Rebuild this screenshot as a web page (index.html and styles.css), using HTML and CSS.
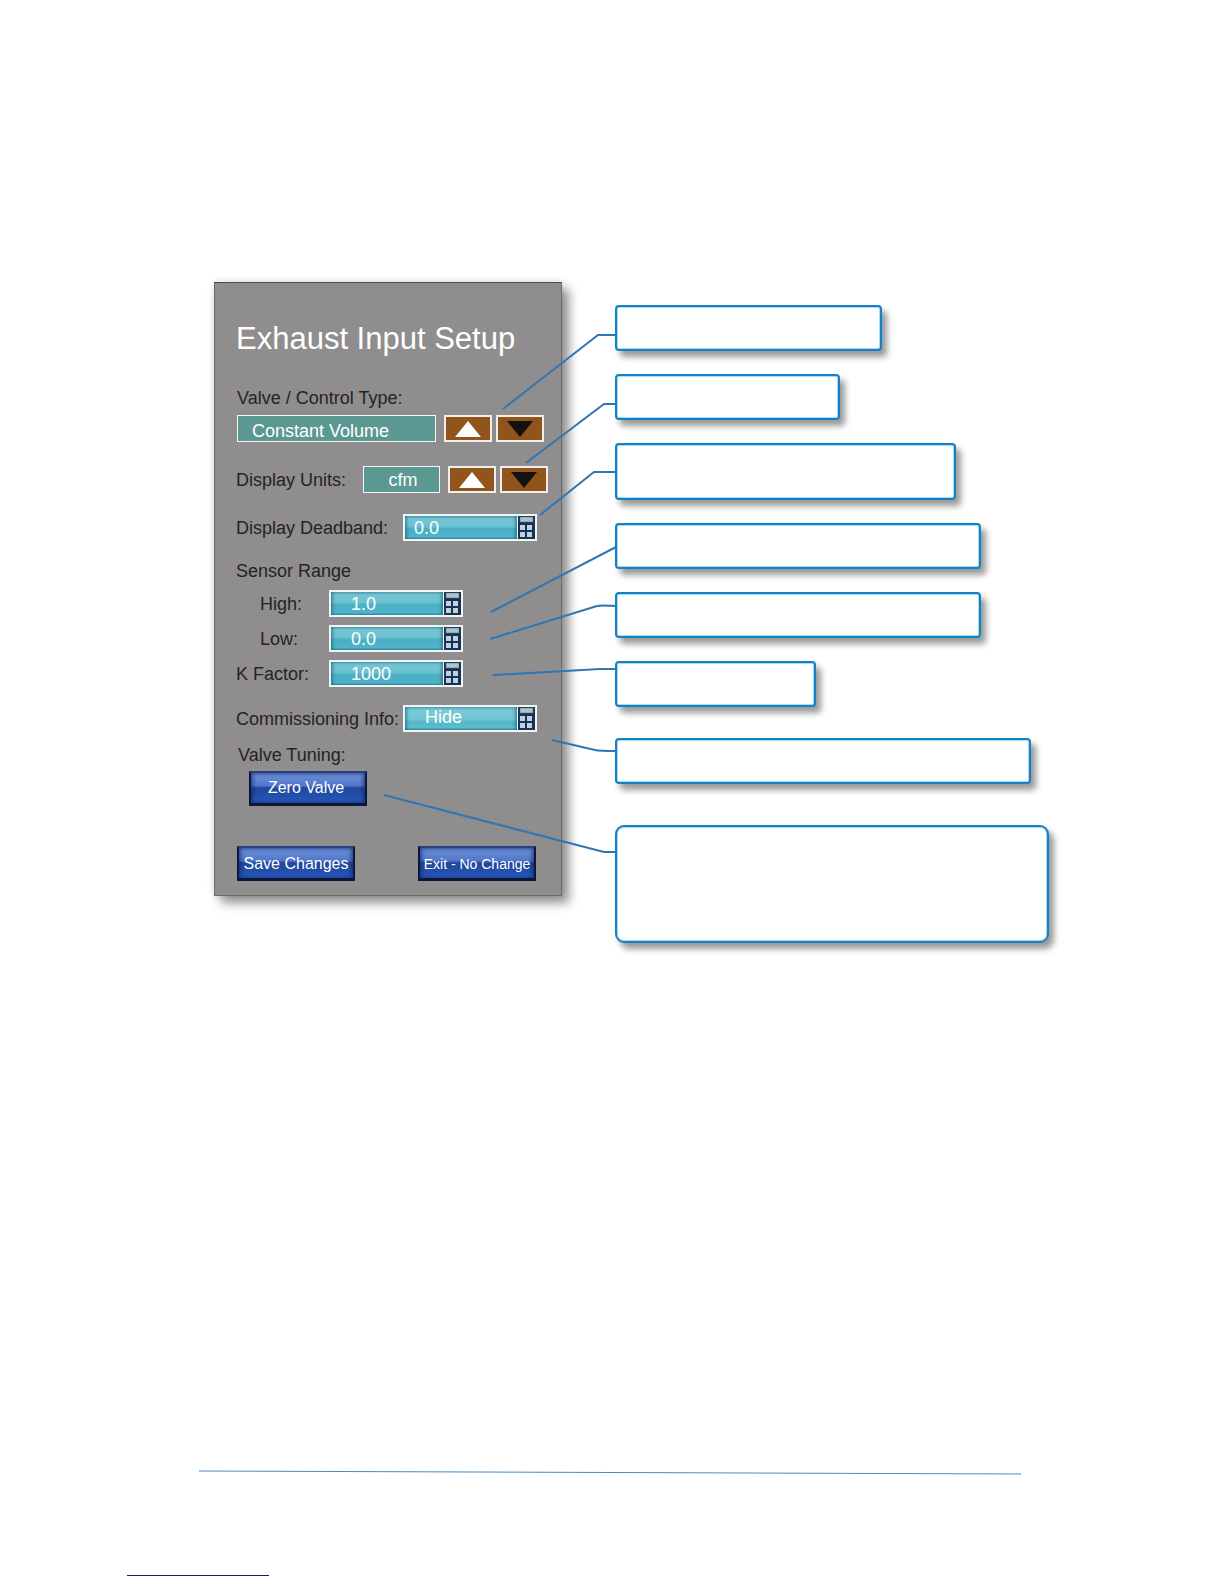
FILE: index.html
```html
<!DOCTYPE html>
<html lang="en">
<head>
<meta charset="utf-8">
<title>Exhaust Input Setup</title>
<link rel="stylesheet" href="styles.css">
</head>
<body>
<svg class="symbols" aria-hidden="true">
  <symbol id="calc" viewBox="0 0 17 23">
    <rect x="2" y="1" width="13" height="5" fill="#a9c6cc" stroke="#4d6a80" stroke-width=".5"/>
    <rect x="2" y="9" width="5" height="5" fill="#b9d5e4"/>
    <rect x="9" y="9" width="5" height="5" fill="#b9d5e4"/>
    <rect x="2" y="16" width="5" height="5" fill="#b9d5e4"/>
    <rect x="9" y="16" width="5" height="5" fill="#b9d5e4"/>
  </symbol>
  <symbol id="up" viewBox="0 0 44 23"><path d="M22 4 35 20H9Z" fill="#fff"/></symbol>
  <symbol id="down" viewBox="0 0 44 23"><path d="M22 20 35 4H9Z" fill="#15110f"/></symbol>
</svg>
<main class="figure">
  <form class="panel">
    <h1 class="title">Exhaust Input Setup</h1>
    <section class="valve-type">
      <label class="label" for="type">Valve / Control Type:</label>
      <div class="row stepper">
        <input class="choice choice-wide" id="type" type="text" value="Constant Volume">
        <button class="step" type="button" aria-label="Previous type"><svg><use href="#up"/></svg></button>
        <button class="step" type="button" aria-label="Next type"><svg><use href="#down"/></svg></button>
      </div>
    </section>
    <div class="row units">
      <label class="label" for="units">Display Units:</label>
      <div class="row stepper">
        <input class="choice choice-unit" id="units" type="text" value="cfm">
        <button class="step" type="button" aria-label="Previous unit"><svg><use href="#up"/></svg></button>
        <button class="step" type="button" aria-label="Next unit"><svg><use href="#down"/></svg></button>
      </div>
    </div>
    <div class="row wide-row">
      <label class="label" for="deadband">Display Deadband:</label>
      <div class="field field-near"><input id="deadband" type="text" value="0.0"><button type="button" aria-label="Enter deadband"><svg><use href="#calc"/></svg></button></div>
    </div>
    <fieldset class="range">
      <legend class="label">Sensor Range</legend>
      <div class="row range-row indent">
        <label class="label" for="high">High:</label>
        <div class="field"><input id="high" type="text" value="1.0"><button type="button" aria-label="Enter high"><svg><use href="#calc"/></svg></button></div>
      </div>
      <div class="row range-row indent">
        <label class="label" for="low">Low:</label>
        <div class="field"><input id="low" type="text" value="0.0"><button type="button" aria-label="Enter low"><svg><use href="#calc"/></svg></button></div>
      </div>
      <div class="row range-row">
        <label class="label" for="kfactor">K Factor:</label>
        <div class="field"><input id="kfactor" type="text" value="1000"><button type="button" aria-label="Enter K factor"><svg><use href="#calc"/></svg></button></div>
      </div>
    </fieldset>
    <div class="row wide-row">
      <label class="label" for="info">Commissioning Info:</label>
      <div class="field field-light"><input id="info" type="text" value="Hide"><button type="button" aria-label="Change commissioning info"><svg><use href="#calc"/></svg></button></div>
    </div>
    <section class="tuning">
      <h2 class="label">Valve Tuning:</h2>
      <button class="action zero" type="button">Zero Valve</button>
    </section>
    <div class="actions">
      <button class="action" type="button">Save Changes</button>
      <button class="action small" type="button">Exit - No Change</button>
    </div>
  </form>
  <div class="callouts">
    <div class="callout c1"></div>
    <div class="callout c2"></div>
    <div class="callout c3"></div>
    <div class="callout c4"></div>
    <div class="callout c4"></div>
    <div class="callout c5"></div>
    <div class="callout c6"></div>
    <div class="callout c7"></div>
  </div>
  <svg class="leaders" viewBox="214 282 402 613" aria-hidden="true">
    <path d="M503 409 598 335H616M526 463 604 404H616M540 515 594 472H616M491 612 616 547M490 639 597 606Q600 605 616 606M493 675 600 669H616M552 740 595 750Q599 751 616 751M384 795 604 852H616"/>
  </svg>
</main>
<footer class="footer">
  <svg class="rule" viewBox="0 0 822 5" preserveAspectRatio="none" aria-hidden="true"><path d="M0 1 822 4"/></svg>
  <div class="underline"></div>
</footer>
</body>
</html>
```
FILE: styles.css
```css
* { box-sizing: border-box; }

body {
  margin: 0;
  min-height: 100vh;
  display: flex;
  flex-direction: column;
  background: #fff;
  font: 18px/20px "Liberation Sans", Arial, sans-serif;
  color: #252324;
}

button, input { font: inherit; margin: 0; padding: 0; border-radius: 0; }
button { cursor: pointer; }
.symbols { display: none; }

.figure {
  position: relative;
  display: flex;
  align-items: flex-start;
  gap: 53px;
  padding: 0 175px 0 214px;
  margin-top: 282px;
}

.panel {
  flex: 0 0 348px;
  padding: 38px 12px 14px 21px;
  border: 1px solid #6c6a6a;
  border-top-color: #4c4b4c;
  background: #8f8d8d;
  box-shadow: 7px 7px 10px rgba(0, 0, 0, .42), 0 0 8px rgba(0, 0, 0, .12);
}

.title { margin: 0; font-size: 31px; line-height: 36px; font-weight: 400; color: #fff; white-space: nowrap; }
.label { display: block; margin: 0; padding: 0; font-size: 18px; font-weight: 400; white-space: nowrap; }
.row { display: flex; align-items: center; }

.valve-type { margin-top: 31px; padding-left: 1px; }
.valve-type .row { margin-top: 7px; }
.stepper { gap: 4px; }
.choice {
  height: 27px;
  margin-right: 4px;
  border: 1px solid #f4f8f8;
  background: #5b9891;
  color: #fff;
}
.choice-wide { width: 199px; padding: 5px 0 0 14px; }
.choice-unit { width: 77px; text-align: center; padding: 2px 0 0 3px; }
.step { width: 48px; height: 27px; border: 2px solid #f3efec; background: #91541b; }
.step svg { display: block; width: 44px; height: 23px; }

.units { margin-top: 24px; }
.units > .label { width: 127px; }
.wide-row { margin-top: 21px; }
.wide-row .label { width: 167px; }

.field {
  display: flex;
  width: 134px;
  height: 27px;
  border: 2px solid #eef6f8;
}
.field input {
  flex: 1;
  min-width: 0;
  padding-left: 20px;
  border: 0;
  color: #fff;
  background: linear-gradient(#5aa9b9, #74c5d3 15%, #6cc2d2 45%, #4aafc5 55%, #4eb4c9 90%, #3b8fa4);
  box-shadow: inset 3px 0 3px -1px rgba(20, 90, 110, .55), inset -3px 0 3px -1px rgba(20, 90, 110, .55);
}
.field-near input { padding-left: 9px; }
.field-light input { padding-bottom: 3px; background: linear-gradient(#5fb0bd, #76c9d6 15%, #72c6d4 55%, #55b6c9 65%, #5cbccd 90%, #3b8fa4); }
.field button { width: 18px; border: 0; border-left: 1px solid #eef6f8; background: #1e2f52; }
.field svg { display: block; width: 17px; height: 23px; }

.range { margin: 20px 0 0; padding: 0; border: 0; min-width: 0; }
.range legend + .row { margin-top: 9px; }
.range-row { margin-top: 8px; }
.range-row .label { width: 93px; }
.indent .label { padding-left: 24px; }
.range + .wide-row { margin-top: 18px; }

.tuning { margin-top: 13px; padding-left: 2px; }
.action {
  display: block;
  width: 118px;
  height: 35px;
  padding-top: 2px;
  border: 2px solid #0c1738;
  border-top-color: #27407c;
  border-bottom-width: 3px;
  background: linear-gradient(#6f92d8, #5277cb 42%, #20479a 50%, #2450ae 80%, #2e5fc6);
  box-shadow: inset 2px 0 4px rgba(16, 40, 110, .6), inset -2px 0 4px rgba(16, 40, 110, .6);
  color: #fff;
  font-size: 16px;
  white-space: nowrap;
}
.zero { margin: 6px 0 0 11px; padding: 0 4px 0 0; }
.actions { display: flex; justify-content: space-between; margin-top: 40px; padding: 0 13px 0 1px; }
.small { font-size: 14px; }

.callouts { flex: 1; display: flex; flex-direction: column; gap: 23px; padding-top: 23px; }
.callout {
  width: 100%;
  min-height: 46px;
  border: 2px solid #1580c6;
  border-radius: 4px;
  background: #fff;
  box-shadow: 5px 6px 6px rgba(0, 0, 0, .4), inset 0 0 0 1px #a5dcf6;
}
.c1 { max-width: 267px; }
.c2 { max-width: 225px; }
.c3 { max-width: 341px; min-height: 57px; }
.c4 { max-width: 366px; }
.c5 { max-width: 201px; }
.c6 { max-width: 416px; margin-top: 8px; }
.c7 { max-width: 434px; min-height: 118px; margin-top: 18px; border-radius: 9px; }

.leaders { position: absolute; left: 214px; top: 0; width: 402px; height: 613px; pointer-events: none; }
.leaders path { fill: none; stroke: #2f76b5; stroke-width: 2; }

.footer { margin-top: auto; padding-bottom: 8px; }
.rule { display: block; width: calc(100% - 402px); height: 5px; margin: 0 203px 0 199px; }
.rule path { stroke: #4689c4; stroke-width: 1; }
.underline { width: 142px; margin: 100px 0 0 127px; border-bottom: 1px solid #17177f; }
```
